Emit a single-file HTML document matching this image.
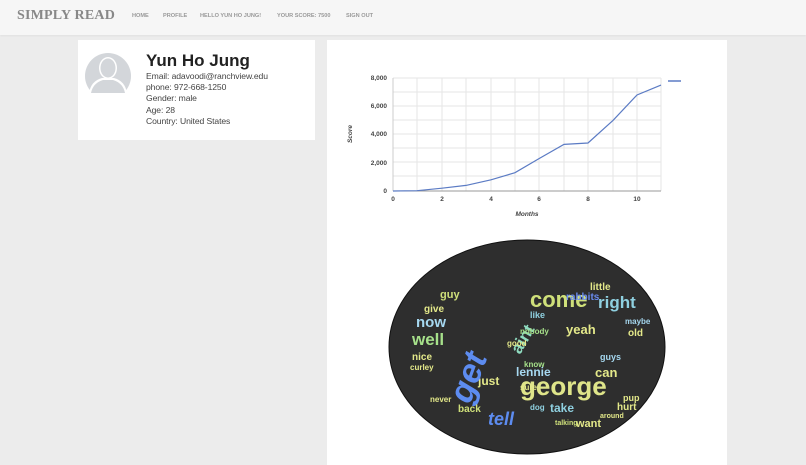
<!DOCTYPE html>
<html><head><style>
body{margin:0;width:806px;height:465px;overflow:hidden;background:#ececec;font-family:"Liberation Sans",sans-serif;position:relative}
.hdr{position:absolute;left:0;top:0;width:806px;height:35px;background:#f6f6f6;box-shadow:0 1px 2px rgba(0,0,0,.05)}
.logo{position:absolute;left:17px;top:8px;font-family:"Liberation Serif",serif;font-weight:bold;font-size:14px;color:#888;letter-spacing:.2px}
.nav{position:absolute;top:13px;font-size:5.6px;color:#999;font-weight:bold;white-space:nowrap}
.card{position:absolute;background:#fff}
.av{position:absolute;left:85px;top:53px;width:46px;height:40px;overflow:hidden}
.info{position:absolute;left:146px;top:71px;font-size:8.6px;color:#444;line-height:11.2px;letter-spacing:-.1px}
h1{position:absolute;left:146px;top:51px;margin:0;font-size:17px;color:#222;font-weight:900}
</style></head><body>
<div class="hdr"></div>
<div class="logo">SIMPLY READ</div>
<div class="nav" style="left:132px">HOME</div>
<div class="nav" style="left:163px">PROFILE</div>
<div class="nav" style="left:200px">HELLO YUN HO JUNG!</div>
<div class="nav" style="left:277px">YOUR SCORE: 7500</div>
<div class="nav" style="left:346px">SIGN OUT</div>
<div class="card" style="left:78px;top:40px;width:237px;height:100px"></div>
<div class="card" style="left:327px;top:40px;width:400px;height:425px"></div>
<div class="av"><svg width="46" height="40" viewBox="0 0 46 40"><circle cx="23" cy="23" r="23" fill="#d3d6da"/><ellipse cx="23" cy="15" rx="9" ry="11" fill="#fff"/><path d="M4 40 Q6 28 17 25 L29 25 Q40 28 42 40Z" fill="#fff"/><ellipse cx="23" cy="15" rx="7.5" ry="9.5" fill="#d3d6da"/><path d="M6 40 Q8 30 18 27 L28 27 Q38 30 40 40Z" fill="#d3d6da"/></svg></div>
<h1>Yun Ho Jung</h1>
<div class="info">Email: adavoodi@ranchview.edu<br>phone: 972-668-1250<br>Gender: male<br>Age: 28<br>Country: United States</div>
<svg style="position:absolute;left:0;top:0" width="806" height="465" font-family="Liberation Sans">
<g stroke="#e6e6e6" stroke-width="1">
<line x1="393" y1="78" x2="661" y2="78"/><line x1="393" y1="92" x2="661" y2="92"/><line x1="393" y1="106" x2="661" y2="106"/><line x1="393" y1="120" x2="661" y2="120"/><line x1="393" y1="134" x2="661" y2="134"/><line x1="393" y1="148" x2="661" y2="148"/><line x1="393" y1="162" x2="661" y2="162"/><line x1="393" y1="176" x2="661" y2="176"/>
<line x1="417" y1="78" x2="417" y2="191"/><line x1="442" y1="78" x2="442" y2="191"/><line x1="466" y1="78" x2="466" y2="191"/><line x1="491" y1="78" x2="491" y2="191"/><line x1="515" y1="78" x2="515" y2="191"/><line x1="539" y1="78" x2="539" y2="191"/><line x1="564" y1="78" x2="564" y2="191"/><line x1="588" y1="78" x2="588" y2="191"/><line x1="613" y1="78" x2="613" y2="191"/><line x1="637" y1="78" x2="637" y2="191"/><line x1="661" y1="78" x2="661" y2="191"/>
</g>
<line x1="393" y1="78" x2="393" y2="191" stroke="#ccc"/>
<line x1="393" y1="191" x2="661" y2="191" stroke="#999"/>
<g font-size="6.5" font-weight="bold" fill="#444" text-anchor="end">
<text x="387" y="80">8,000</text><text x="387" y="108">6,000</text><text x="387" y="136">4,000</text><text x="387" y="165">2,000</text><text x="387" y="193">0</text></g>
<g font-size="6.5" font-weight="bold" fill="#444" text-anchor="middle">
<text x="393" y="201">0</text><text x="442" y="201">2</text><text x="491" y="201">4</text><text x="539" y="201">6</text><text x="588" y="201">8</text><text x="637" y="201">10</text>
<text x="527" y="216" font-style="italic">Months</text>
<text transform="translate(352,134) rotate(-90)" font-style="italic">Score</text></g>
<polyline fill="none" stroke="#5b7bc4" stroke-width="1.2" points="393,191 417,190.7 442,188.2 466,185.4 491,179.8 515,172.7 539,158.6 564,144.4 588,143 613,120.4 637,95 661,85.1"/>
<line x1="668" y1="81" x2="681" y2="81" stroke="#5b7bc4" stroke-width="1.5"/>
<ellipse cx="527" cy="347" rx="138" ry="107" fill="#2e2e2e" stroke="#111"/>
<g font-weight="bold">
<text x="530" y="307" font-size="22" fill="#cfe07a">come</text>
<text x="598" y="308" font-size="17" fill="#8fd0e0">right</text>
<text x="520" y="395" font-size="26" fill="#dfe58a">george</text>
<text x="412" y="345" font-size="17" fill="#a6e08a">well</text>
<text x="416" y="327" font-size="15" fill="#a6d8f0">now</text>
<text x="566" y="334" font-size="13" fill="#e4e98a">yeah</text>
<text x="516" y="376" font-size="12" fill="#a7d8f0">lennie</text>
<text x="478" y="385" font-size="12" fill="#e4e98a">just</text>
<text x="488" y="425" font-size="18" fill="#5d8cf0" font-style="italic">tell</text>
<text x="470" y="405" font-size="34" fill="#5d8cf0" font-style="italic" transform="rotate(-70 470 405)">get</text>
<text x="520" y="355" font-size="17" fill="#8fdcc0" transform="rotate(-60 520 355)">aint</text>
<text x="595" y="377" font-size="13" fill="#e4e98a">can</text>
<text x="550" y="412" font-size="12" fill="#8fd0e0">take</text>
<text x="576" y="427" font-size="11" fill="#e4e98a">want</text>
<text x="617" y="410" font-size="10" fill="#e4e98a">hurt</text>
<text x="424" y="312" font-size="10" fill="#e4e98a">give</text>
<text x="440" y="298" font-size="11" fill="#cfe07a">guy</text>
<text x="412" y="360" font-size="10" fill="#e4e98a">nice</text>
<text x="590" y="290" font-size="10" fill="#e4e98a">little</text>
<text x="628" y="336" font-size="10" fill="#e4e98a">old</text>
<text x="600" y="360" font-size="9" fill="#a6d8f0">guys</text>
<text x="458" y="412" font-size="10" fill="#cfe07a">back</text>
<text x="623" y="401" font-size="9" fill="#e4e98a">pup</text>
<text x="530" y="318" font-size="9" fill="#8fd0e0">like</text>
<text x="430" y="402" font-size="8" fill="#e4e98a">never</text>
<text x="555" y="425" font-size="7" fill="#cfe07a">talking</text>
<text x="600" y="418" font-size="7" fill="#e4e98a">around</text>
<text x="625" y="324" font-size="8" fill="#a6d8f0">maybe</text>
<text x="566" y="300" font-size="10" fill="#6a8cf0">rabbits</text>
<text x="520" y="390" font-size="8" fill="#e4e98a">sure</text>
<text x="410" y="370" font-size="8" fill="#e4e98a">curley</text>
<text x="520" y="334" font-size="8" fill="#a6e08a">nobody</text>
<text x="530" y="410" font-size="8" fill="#8fd0e0">dog</text>
<text x="507" y="346" font-size="8" fill="#e4e98a">good</text>
<text x="524" y="367" font-size="8" fill="#a6e08a">know</text>
</g>
</svg>
</body></html>
